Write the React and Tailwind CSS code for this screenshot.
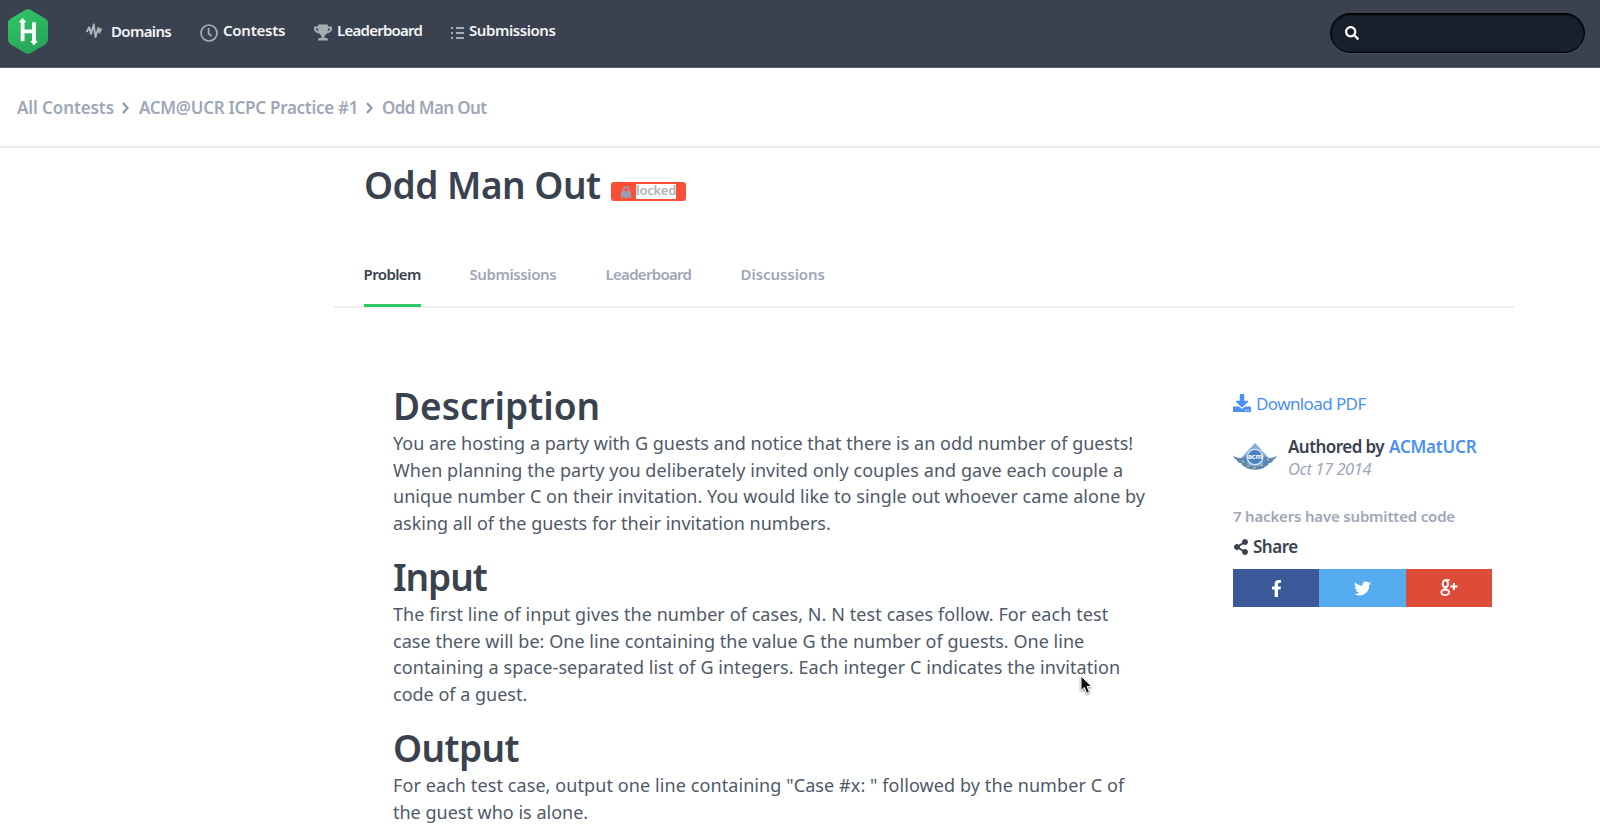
import { FaDownload, FaFacebookF, FaLock, FaSearch, FaShareAlt, FaTrophy, FaTwitter } from 'react-icons/fa'

const sections = [
  {
    title: 'Description',
    titleClass: '',
    lines: [
      ['You are hosting a party with G guests and notice that there is an odd number of guests!', 'tracking-[0.015px]'],
      ['When planning the party you deliberately invited only couples and gave each couple a', 'tracking-[0.06px]'],
      ['unique number C on their invitation. You would like to single out whoever came alone by', 'tracking-[0.045px]'],
      ['asking all of the guests for their invitation numbers.', ''],
    ],
  },
  {
    title: 'Input',
    titleClass: 'tracking-[-1.1px]',
    lines: [
      ['The first line of input gives the number of cases, N. N test cases follow. For each test', 'tracking-[0.08px]'],
      ['case there will be: One line containing the value G the number of guests. One line', 'tracking-[0.04px]'],
      ['containing a space-separated list of G integers. Each integer C indicates the invitation', 'tracking-[0.09px]'],
      ['code of a guest.', ''],
    ],
  },
  {
    title: 'Output',
    titleClass: 'tracking-[-0.6px]',
    lines: [
      ['For each test case, output one line containing "Case #x: " followed by the number C of', 'tracking-[0.09px]'],
      ['the guest who is alone.', ''],
    ],
  },
]

const tabs = [
  { label: 'Problem', className: 'w-[57px] tracking-[-0.6px]', active: true },
  { label: 'Submissions', className: 'w-[87px] tracking-[-0.4px]' },
  { label: 'Leaderboard', className: 'w-[86px] tracking-[-0.7px]' },
  { label: 'Discussions', className: 'w-[84px] tracking-[-0.05px]' },
]

function Logo() {
  return (
    <svg width="40" height="45" viewBox="0 0 40 45" className="shrink-0">
      <defs>
        <linearGradient id="logo" x1="0" y1="0" x2="0.5" y2="1">
          <stop offset="0" stopColor="#32c766" />
          <stop offset="1" stopColor="#27a65a" />
        </linearGradient>
      </defs>
      <path d="M17.2 1.1Q20-.5 22.8 1.1L37.2 9.6Q40 11.2 40 14.4V30.6Q40 33.8 37.2 35.4L22.8 43.9Q20 45.5 17.2 43.9L2.800 35.400Q0 33.800 0 30.600V14.400Q0 11.200 2.800 9.600Z" fill="url(#logo)" />
      <path d="M14.6 12V32.200M26 13.300V33M14.600 22.400H26" stroke="#fff" strokeWidth="3.800" fill="none" />
      <path d="M14.600 9.300L17.800 13H11.400ZM26 36L22.800 32.300H29.200Z" fill="#fff" stroke="#fff" strokeWidth="0.800" strokeLinejoin="round" />
    </svg>
  )
}

function PulseIcon() {
  return (
    <svg width="16" height="16" viewBox="0 0 16 16" fill="none" stroke="#b1b5bb" strokeWidth="1.900" strokeLinejoin="round" strokeLinecap="round">
      <path d="M1 8.300L3.200 4.300L5 11L7.700 1.500L9.500 14L12.300 5L13.400 9.500L15 6" />
    </svg>
  )
}

function ClockIcon() {
  return (
    <svg width="18" height="18" viewBox="0 0 18 18" fill="none" stroke="#a7abb2" strokeWidth="1.700">
      <circle cx="9" cy="9" r="8" />
      <path d="M8.600 4V9.500L11.500 12" />
    </svg>
  )
}

function ListIcon() {
  return (
    <svg width="14" height="12" viewBox="0 0 14 12" fill="#a7abb2">
      <path d="M0 0h2v2H0zM5 0h8v2H5zM0 5h2v2H0zM5 5h8v2H5zM0 10h2v2H0zM5 10h8v2H5z" />
    </svg>
  )
}

function Chevron() {
  return (
    <svg width="7" height="12" viewBox="0 0 7 12" fill="none" stroke="#8f98aa" strokeWidth="2.200">
      <path d="M1 1L5.500 6L1 11" />
    </svg>
  )
}

function GooglePlusIcon() {
  return (
    <svg width="18" height="18" viewBox="0 0 18 18" fill="none" stroke="#fff">
      <ellipse cx="5.300" cy="4.800" rx="2.600" ry="3.500" strokeWidth="1.900" />
      <path d="M5.500 1H9.800M6.500 8.300C4.300 9.200 5.500 9.800 7 10.900" strokeWidth="1.600" />
      <ellipse cx="5.200" cy="13.300" rx="3.900" ry="2.800" strokeWidth="1.900" />
      <path d="M10.300 7.500H17.500M13.900 4V11" strokeWidth="2" />
    </svg>
  )
}

function Avatar() {
  return (
    <svg width="44" height="28" viewBox="0 0 44 28">
      <path d="M22 0L35 14L33 23L22 27L11 23L9 14Z" fill="#86abd9" />
      <path d="M0 13C6 16 10 15 13 13L15 24C10 24 9 22 8 20C5 20 4 18 4 17C2 16 1 15 0 13Z" fill="#5b86b6" />
      <path d="M44 13C38 16 34 15 31 13L29 24C34 24 35 22 36 20C39 20 40 18 40 17C42 16 43 15 44 13Z" fill="#5b86b6" />
      <path d="M12 21Q22 26 32 21L31 25Q22 28 13 25Z" fill="#5a82ad" />
      <path d="M14 23l2 1M20 25h3M28 23l2-1M9 18l2 1M34 17l2-1" stroke="#c5b77b" strokeWidth="1.500" />
      <circle cx="22" cy="14" r="7.700" fill="#4482c4" stroke="#d3e4f6" strokeWidth="1.300" />
      <text x="22" y="16" textAnchor="middle" fontSize="7" fontWeight="700" fill="#fff">acm</text>
    </svg>
  )
}

function Cursor() {
  return (
    <svg width="13" height="20" viewBox="0 0 13 20" className="absolute left-[1080px] top-[675px] drop-shadow-[0_1px_1px_rgba(0,0,0,0.5)]">
      <path d="M1 1V15.500L4.300 12.500L6.700 18.300L9.500 17.100L7.100 11.500H11.800Z" fill="#111" stroke="#fff" strokeWidth="1" />
    </svg>
  )
}

export default function App() {
  return (
    <div className="relative h-[836px] overflow-hidden bg-white font-['Noto_Sans',sans-serif] text-[#39424e]">
      <header className="flex h-[68px] items-start border-b border-[#5d636e] bg-[#3b424f] pl-2 text-[15px] leading-5 font-semibold text-[#f3f4f5]">
        <div className="pt-[9px]"><Logo /></div>
        <nav className="flex pt-5">
          <a className="ml-[38px] flex w-[114px] pt-px">
            <span className="mr-[9px] pt-[2px]"><PulseIcon /></span>
            <span className="tracking-[-0.65px]">Domains</span>
          </a>
          <a className="flex w-[114px]">
            <span className="mr-[5px] pt-[4px]"><ClockIcon /></span>
            <span className="tracking-[-0.25px]">Contests</span>
          </a>
          <a className="flex w-[137px]">
            <FaTrophy className="mt-[4px] mr-[5px] h-[17px] w-[18px] text-[#a7abb2]" />
            <span className="tracking-[-0.75px]">Leaderboard</span>
          </a>
          <a className="flex">
            <span className="mr-[4px] pt-[7px]"><ListIcon /></span>
            <span className="tracking-[-0.42px]">Submissions</span>
          </a>
        </nav>
        <div className="mt-[13px] mr-[15px] ml-auto flex h-10 w-[255px] items-center rounded-full border border-black bg-[#18202d] pl-[14px] shadow-[inset_0_1px_2px_#000,0_1px_0_#4a515e]">
          <FaSearch className="size-[14px] text-white" />
        </div>
      </header>

      <div className="flex h-[80px] items-center border-b-2 border-[#e9ebef] pt-[2px] pl-[17px] text-[17px] leading-6 font-semibold text-[#a0a7b7]">
        <span className="w-[105px] tracking-[-0.1px]">All Contests</span>
        <Chevron />
        <span className="ml-[10px] w-[227px] tracking-[-0.29px]">ACM@UCR ICPC Practice #1</span>
        <Chevron />
        <span className="ml-[9px] tracking-[-0.6px]">Odd Man Out</span>
      </div>

      <div className="ml-[334px] w-[1180px]">
        <div className="flex h-[104px] items-start pl-[29px]">
          <h1 className="mt-[17px] w-[248px] pl-px text-[37px] leading-10 font-semibold tracking-[-0.5px] whitespace-nowrap">Odd Man Out</h1>
          <span className="mt-[34px] flex h-[19px] w-[75px] items-center rounded-[3px] bg-[#fa5038] pl-[10px] text-[13px] leading-[15px] font-semibold text-[#b3b3b3]">
            <FaLock className="mr-[5px] h-[12px] w-[10px] text-[#98a0b0]" />
            <span className="h-[15px] w-10 bg-white tracking-[-0.25px]"><span className="relative -top-px">locked</span></span>
          </span>
        </div>
        <div className="flex h-[56px] gap-[49px] border-b-2 border-[#eff0f1] pl-[29.5px] text-[15px] leading-5 font-semibold">
          {tabs.map((tab) => (
            <div
              key={tab.label}
              className={`${tab.className} h-[55px] pt-[12px] whitespace-nowrap ${tab.active ? 'border-b-3 border-[#2ec866]' : 'text-[#a0a7b7]'}`}
            >
              {tab.label}
            </div>
          ))}
        </div>

        <div className="flex pl-[59px]">
          <main className="w-[840px] pt-[78px]">
            {sections.map((s) => (
              <section key={s.title} className="mb-[21px]">
                <h2 className={`mb-1 text-[37px] leading-10 font-semibold ${s.titleClass}`}>{s.title}</h2>
                {s.lines.map(([text, className]) => (
                  <p key={text} className={`text-[18px] leading-[26.5px] whitespace-nowrap text-[#505967] ${className}`}>{text}</p>
                ))}
              </section>
            ))}
          </main>

          <aside className="w-[260px] pt-[84px]">
            <a className="flex h-6 items-center text-[17px] text-[#4a90f5]">
              <FaDownload className="mr-[5px] mb-[2px] size-[18px]" />
              <span className="tracking-[-0.6px]">Download PDF</span>
            </a>
            <div className="mt-[20px] flex text-[17px] leading-[21px]">
              <div className="w-[55px] pt-[7px]"><Avatar /></div>
              <div>
                <p className="flex font-semibold whitespace-nowrap">
                  <span className="w-[101px] tracking-[-0.55px]">Authored by</span>
                  <a className="tracking-[-0.2px] text-[#4a90f5]">ACMatUCR</a>
                </p>
                <p className="pt-px text-[16.5px] tracking-[-0.45px] text-[#a0a7b7] italic">Oct 17 2014</p>
              </div>
            </div>
            <p className="mt-[27px] text-[15px] leading-5 font-semibold tracking-[-0.18px] text-[#a0a7b7]">7 hackers have submitted code</p>
            <div className="mt-[9px] flex h-6 items-center text-[17px] font-semibold">
              <FaShareAlt className="mr-[4px] size-4" />
              <span className="tracking-[-0.5px]">Share</span>
            </div>
            <div className="mt-[10px] grid h-[38px] w-[259px] grid-cols-3 text-white">
              <a className="flex items-center justify-center bg-[#3b5998]"><FaFacebookF className="size-[17px]" /></a>
              <a className="flex items-center justify-center bg-[#55acee]"><FaTwitter className="size-[17px]" /></a>
              <a className="flex items-center justify-center bg-[#dd4b39]"><GooglePlusIcon /></a>
            </div>
          </aside>
        </div>
      </div>
      <Cursor />
    </div>
  )
}
